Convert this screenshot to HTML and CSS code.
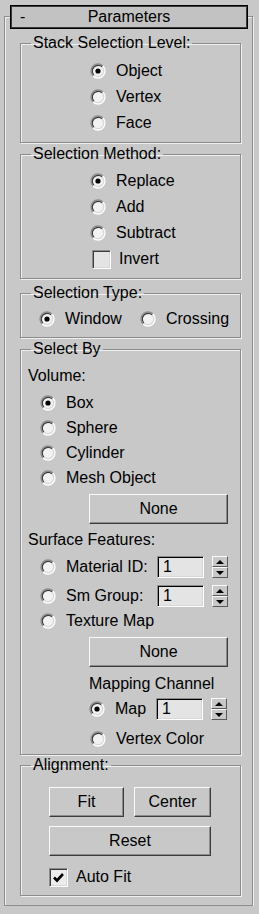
FILE: index.html
```html
<!DOCTYPE html>
<html lang="en">
  <head>
    <meta charset="UTF-8" />
    <title>Parameters</title>
    <link rel="stylesheet" href="styles.css">
  </head>
  <body>
    <svg class="defs" width="0" height="0">
      <symbol id="radio" viewBox="0 0 16 16">
        <circle cx="8" cy="8" r="7" fill="#f2f2f2" />
        <path d="M3.05 12.95 A7 7 0 0 1 12.95 3.05" fill="none" stroke="#8c8c8c" stroke-width="1.3" />
        <path d="M12.95 3.05 A7 7 0 0 1 3.05 12.95" fill="none" stroke="#ffffff" stroke-width="1.3" />
        <path d="M3.9 12.1 A5.8 5.8 0 0 1 12.1 3.9" fill="none" stroke="#3c3c3c" stroke-width="1.2" />
        <path d="M12.1 3.9 A5.8 5.8 0 0 1 3.9 12.1" fill="none" stroke="#d8d8d8" stroke-width="1.2" />
      </symbol>
      <symbol id="radio-on" viewBox="0 0 16 16">
        <use href="#radio" />
        <circle cx="8" cy="8" r="2.6" fill="#000" />
      </symbol>
    </svg>

    <div class="frame">
      <div class="head">
        <span class="minus">-</span>
        <span class="head-title">Parameters</span>
      </div>

      <fieldset class="group g-stack">
        <legend>Stack Selection Level:</legend>
        <div class="body">
          <div class="opt"><svg class="rb"><use href="#radio-on" /></svg><span>Object</span></div>
          <div class="opt"><svg class="rb"><use href="#radio" /></svg><span>Vertex</span></div>
          <div class="opt"><svg class="rb"><use href="#radio" /></svg><span>Face</span></div>
        </div>
      </fieldset>

      <fieldset class="group g-method">
        <legend>Selection Method:</legend>
        <div class="body">
          <div class="opt"><svg class="rb"><use href="#radio-on" /></svg><span>Replace</span></div>
          <div class="opt"><svg class="rb"><use href="#radio" /></svg><span>Add</span></div>
          <div class="opt"><svg class="rb"><use href="#radio" /></svg><span>Subtract</span></div>
          <div class="opt check-opt"><span class="cb"></span><span>Invert</span></div>
        </div>
      </fieldset>

      <fieldset class="group g-type">
        <legend>Selection Type:</legend>
        <div class="body type-row">
          <div class="opt"><svg class="rb"><use href="#radio-on" /></svg><span>Window</span></div>
          <div class="opt"><svg class="rb"><use href="#radio" /></svg><span>Crossing</span></div>
        </div>
      </fieldset>

      <fieldset class="group g-by">
        <legend>Select By</legend>
        <div class="body">
          <div class="label">Volume:</div>
          <div class="vol">
            <div class="opt row25"><svg class="rb"><use href="#radio-on" /></svg><span>Box</span></div>
            <div class="opt row25"><svg class="rb"><use href="#radio" /></svg><span>Sphere</span></div>
            <div class="opt row25"><svg class="rb"><use href="#radio" /></svg><span>Cylinder</span></div>
            <div class="opt row25"><svg class="rb"><use href="#radio" /></svg><span>Mesh Object</span></div>
          </div>
          <button class="btn btn-none">None</button>

          <div class="label surf">Surface Features:</div>
          <div class="vol">
            <div class="opt spin-row">
              <svg class="rb"><use href="#radio" /></svg><span class="spin-label">Material ID:</span>
              <input class="edit" type="text" value="1" readonly />
              <span class="spinner"><span class="up"></span><span class="down"></span></span>
            </div>
            <div class="opt spin-row sm-row">
              <svg class="rb"><use href="#radio" /></svg><span class="spin-label">Sm Group:</span>
              <input class="edit" type="text" value="1" readonly />
              <span class="spinner"><span class="up"></span><span class="down"></span></span>
            </div>
            <div class="opt"><svg class="rb"><use href="#radio" /></svg><span>Texture Map</span></div>
          </div>
          <button class="btn btn-none btn-none2">None</button>

          <div class="map-block">
            <div class="label">Mapping Channel</div>
            <div class="opt spin-row map-row">
              <svg class="rb"><use href="#radio-on" /></svg><span class="map-label">Map</span>
              <input class="edit" type="text" value="1" readonly />
              <span class="spinner"><span class="up"></span><span class="down"></span></span>
            </div>
            <div class="opt vc-row"><svg class="rb"><use href="#radio" /></svg><span>Vertex Color</span></div>
          </div>
        </div>
      </fieldset>

      <fieldset class="group g-align">
        <legend>Alignment:</legend>
        <div class="body">
          <div class="btn-row">
            <button class="btn btn-fit">Fit</button>
            <button class="btn btn-center">Center</button>
          </div>
          <button class="btn btn-reset">Reset</button>
          <div class="opt auto-fit">
            <span class="cb checked">
              <svg viewBox="0 0 13 13" width="13" height="13"><path d="M2 6.5 L5 9.5 L11 3" fill="none" stroke="#000" stroke-width="2.6" /></svg>
            </span>
            <span>Auto Fit</span>
          </div>
        </div>
      </fieldset>
    </div>
  </body>
</html>
```

FILE: styles.css
```css
* {
  margin: 0px;
  padding: 0px;
  box-sizing: border-box;
}
body {
  background-color: #c8c8c8;
  font-family: "Liberation Sans", Arial, sans-serif;
  font-size: 16px;
  color: #000;
  width: 259px;
  padding-top: 16px;
}
.defs {
  position: absolute;
}
.frame {
  margin: 0px 6px 0px 4px;
  height: 890px;
  border: 1px solid #8c8c8c;
  box-shadow: inset 1px 1px 0 #f0f0f0, 1px 1px 0 #f0f0f0;
}
.head {
  display: grid;
  grid-template-columns: 1fr auto 1fr;
  align-items: center;
  height: 24px;
  margin: -12px 4px 0px 5px;
  background-color: #c2c2c2;
  border: 1px solid #000;
  box-shadow: inset 1px 1px 0 #3a3a3a, inset -1px -1px 0 #3a3a3a;
  line-height: 18px;
}
.minus {
  padding-left: 9px;
}
.head-title {
  grid-column: 2;
}

/* group boxes */
.group {
  min-width: 0;
  margin: 0px 11px 0px 15px;
  border: 1px solid #8c8c8c;
  box-shadow: inset 1px 1px 0 #f0f0f0, 1px 1px 0 #f0f0f0;
}
.group legend {
  margin-left: 10px;
  padding: 0px 2px;
  line-height: 18px;
  white-space: nowrap;
}
.opt {
  display: flex;
  align-items: center;
  height: 26px;
  gap: 10px;
  white-space: nowrap;
}
.rb {
  width: 16px;
  height: 16px;
  flex: none;
}
.g-stack {
  margin-top: 5px;
  padding: 6px 0px 6px 0px;
}
.g-stack .body,
.g-method .body {
  padding-left: 69px;
}
.g-method {
  margin-top: 2px;
  padding: 5px 0px 6px 0px;
}
.check-opt {
  gap: 8px;
  padding-left: 2px;
}
.cb {
  display: flex;
  align-items: center;
  justify-content: center;
  width: 19px;
  height: 19px;
  flex: none;
  background-color: #e4e4e4;
  border: 1px solid;
  border-color: #8c8c8c #fff #fff #8c8c8c;
  box-shadow: inset 1px 1px 0 #3c3c3c, inset -1px -1px 0 #d8d8d8;
}
.g-type {
  margin-top: 5px;
  padding: 4px 0px 5px 0px;
}
.type-row {
  display: flex;
  gap: 18px;
  padding-left: 18px;
}
.g-by {
  margin-top: 2px;
  padding: 9px 0px 2px 0px;
}
.g-by .body {
  padding-left: 7px;
}
.label {
  line-height: 18px;
}
.vol {
  margin-top: 5px;
  padding-left: 12px;
}
.row25 {
  height: 25px;
}
.btn {
  display: block;
  font-family: "Liberation Sans", Arial, sans-serif;
  font-size: 16px;
  color: #000;
  background-color: #c8c8c8;
  border: 1px solid;
  border-color: #fafafa #3c3c3c #3c3c3c #fafafa;
  box-shadow: inset -1px -1px 0 #8c8c8c;
  height: 30px;
}
.btn-none {
  width: 139px;
  margin: 4px 0px 0px 61px;
}
.surf {
  margin-top: 7px;
}
.spin-row {
  gap: 0px;
  margin-top: 5px;
}
.spin-row .rb {
  margin-right: 10px;
}
.spin-label {
  width: 91px;
}
.sm-row {
  margin-top: 1px;
  height: 27px;
  padding-top: 3px;
}
.edit {
  width: 47px;
  height: 22px;
  font-family: "Liberation Sans", Arial, sans-serif;
  font-size: 16px;
  padding-left: 5px;
  background-color: #e4e4e4;
  border: 1px solid;
  border-color: #8c8c8c #fff #fff #8c8c8c;
  box-shadow: inset 1px 1px 0 #000, inset -1px -1px 0 #d8d8d8;
  outline: none;
}
.spinner {
  display: flex;
  flex-direction: column;
  width: 16px;
  height: 22px;
  margin-left: 8px;
}
.spinner span {
  flex: 1;
  border: 1px solid;
  border-color: #fafafa #5a5a5a #5a5a5a #fafafa;
  display: flex;
  align-items: center;
  justify-content: center;
}
.spinner .up::after {
  content: "";
  border-left: 4px solid transparent;
  border-right: 4px solid transparent;
  border-bottom: 4px solid #000;
}
.spinner .down::after {
  content: "";
  border-left: 4px solid transparent;
  border-right: 4px solid transparent;
  border-top: 4px solid #000;
}
.btn-none2 {
  margin-top: 3px;
}
.map-block {
  margin-top: 8px;
  padding-left: 61px;
}
.map-row {
  margin-top: 3px;
}
.map-label {
  width: 41px;
}
.vc-row {
  margin-top: 4px;
  height: 26px;
  padding-left: 1px;
}
.g-align {
  margin-top: 1px;
  padding: 13px 0px 6px 0px;
}
.g-align .body {
  padding-left: 28px;
}
.btn-row {
  display: flex;
  gap: 10px;
}
.btn-fit {
  width: 75px;
}
.btn-center {
  width: 77px;
}
.btn-reset {
  width: 162px;
  margin-top: 9px;
}
.auto-fit {
  margin-top: 9px;
  height: 24px;
  gap: 8px;
}
.cb.checked {
  background-color: #ececec;
}
```
